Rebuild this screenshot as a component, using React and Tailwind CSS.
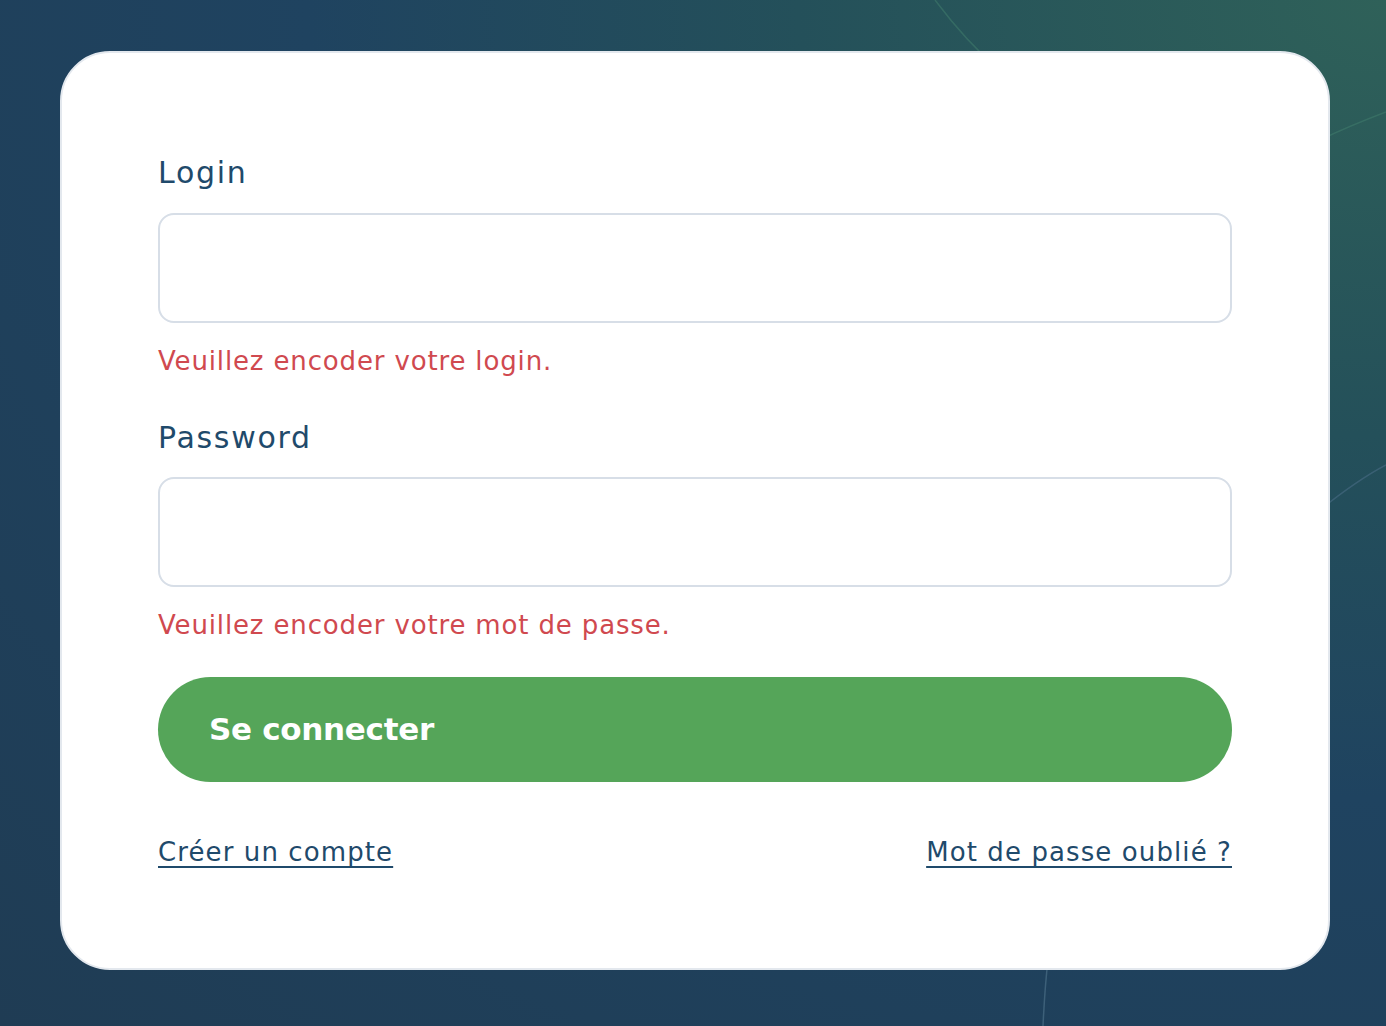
export default function App() {
  return (
    <div className="relative h-[1026px] w-full overflow-hidden bg-[#1f3f57] bg-[radial-gradient(ellipse_at_top_right,#2f6159_0%,#24505a_30%,#1f4360_55%,#1f3c54_100%)] font-['DejaVu_Sans',sans-serif]">
      <svg className="absolute inset-0" width="1386" height="1026" viewBox="0 0 1386 1026" fill="none">
        <path d="M935 0 C 980 60, 1020 90, 1060 110" stroke="#3f7a6a" strokeWidth="1.5" opacity="0.6" />
        <path d="M1320 140 C 1345 128, 1365 120, 1386 112" stroke="#3f7a6a" strokeWidth="1.5" opacity="0.6" />
        <path d="M1320 510 C 1345 490, 1365 476, 1386 465" stroke="#4a6d86" strokeWidth="1.5" opacity="0.6" />
        <path d="M1048 960 C 1045 985, 1044 1005, 1043 1026" stroke="#4a6d86" strokeWidth="1.5" opacity="0.7" />
      </svg>
      <div className="relative pl-[60px] pr-[56px] pt-[51px]">
        <div className="h-[919px] rounded-[50px] border-2 border-[#e3e8ee] bg-white px-[96px] pt-[102px]">
          <div className="flex flex-col">
            <label className="text-[30px] leading-[36px] tracking-[1.7px] text-[#1f4a6b]">Login</label>
            <input className="mt-[22px] h-[110px] w-full rounded-[16px] border-2 border-[#d7dee7] bg-white outline-none" />
            <p className="mt-[22px] text-[26px] leading-[32px] tracking-[0.85px] text-[#d0494f]">Veuillez encoder votre login.</p>
            <label className="mt-[43px] text-[30px] leading-[36px] tracking-[1.7px] text-[#1f4a6b]">Password</label>
            <input type="password" className="mt-[21px] h-[110px] w-full rounded-[16px] border-2 border-[#d7dee7] bg-white outline-none" />
            <p className="mt-[22px] text-[26px] leading-[32px] tracking-[0.85px] text-[#d0494f]">Veuillez encoder votre mot de passe.</p>
            <button className="mt-[36px] flex h-[105px] w-full items-center rounded-full bg-[#55a559] pl-[51px] text-left text-[31px] font-extrabold tracking-[-0.3px] text-white">
              Se connecter
            </button>
            <div className="mt-[54px] flex items-center justify-between text-[26px] leading-[32px] tracking-[1.1px] text-[#1f4a6b]">
              <a href="#" className="underline underline-offset-[5px]">Créer un compte</a>
              <a href="#" className="underline underline-offset-[5px]">Mot de passe oublié ?</a>
            </div>
          </div>
        </div>
      </div>
    </div>
  );
}
